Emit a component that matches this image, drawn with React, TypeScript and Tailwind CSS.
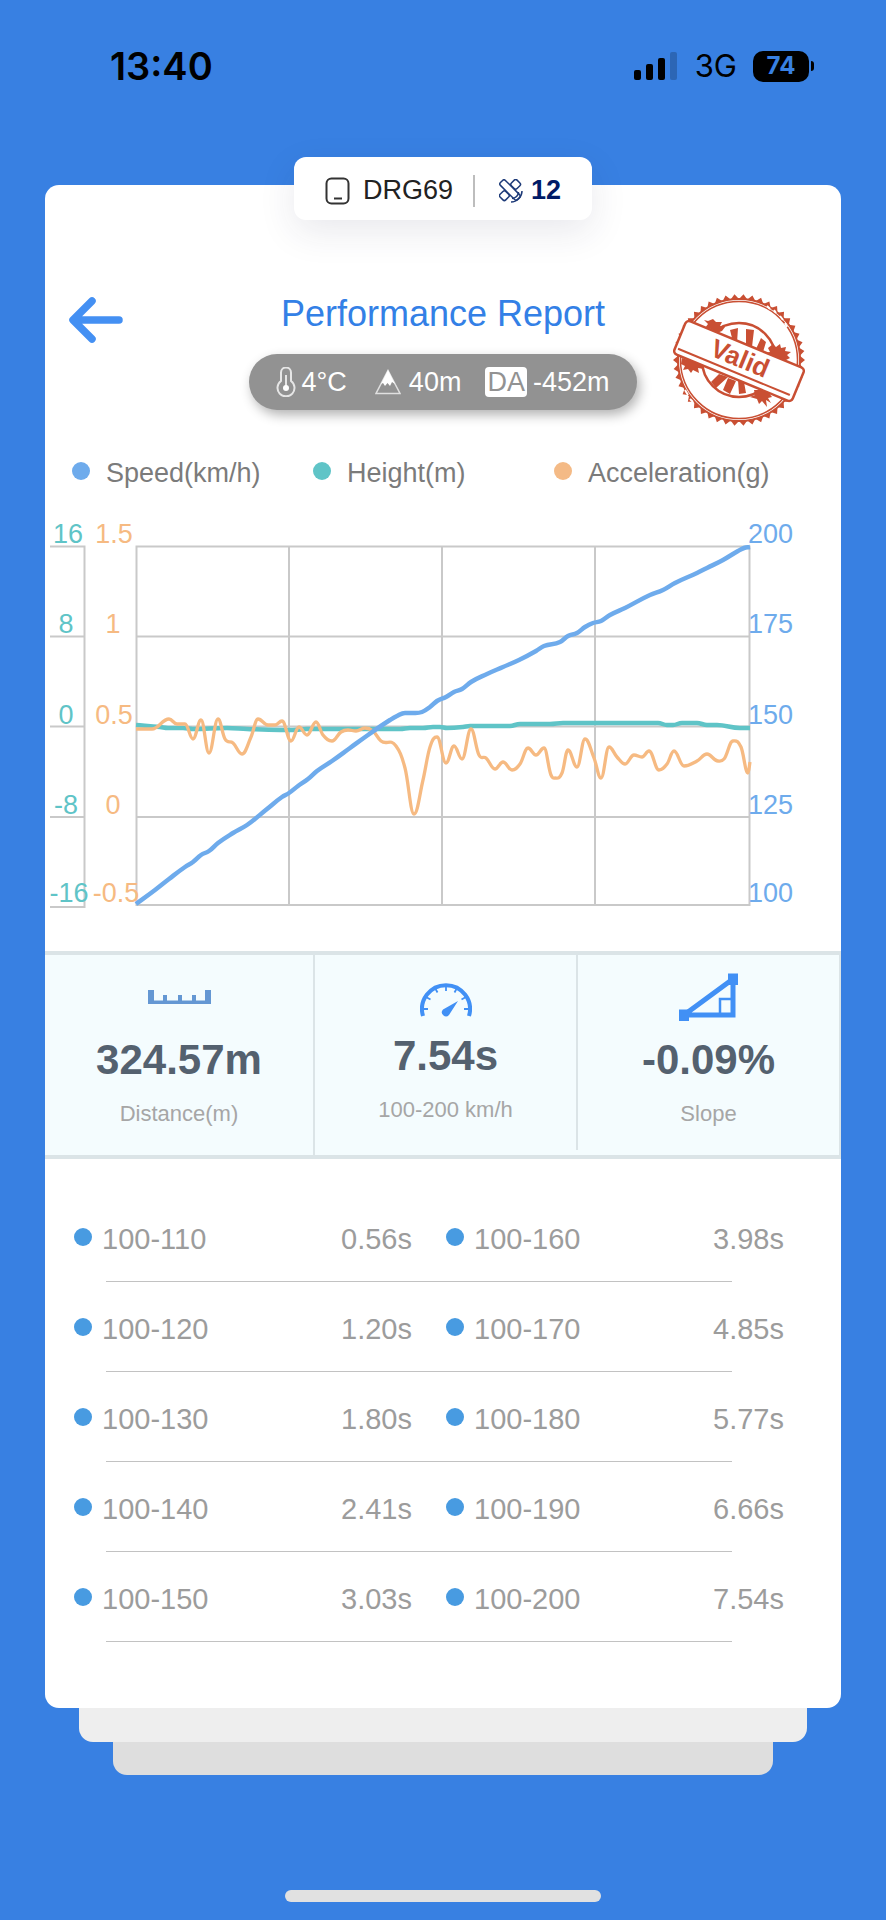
import type { ReactNode } from "react";

type Point = [number, number];

const speed: Point[] = [
  [91, 394], [110, 380], [124, 369], [140, 357], [148, 352], [156, 345], [164, 341], [173, 333],
  [188, 323], [202, 315], [222, 299], [237, 287], [244, 283], [253, 276], [263, 269], [272, 261],
  [287, 251], [305, 238], [323, 225], [345, 210], [352, 206], [360, 203], [369, 203], [377, 202],
  [385, 197], [392, 191], [401, 187], [409, 182], [417, 179], [426, 172], [442, 164], [458, 157],
  [474, 150], [491, 141], [499, 136], [515, 132], [523, 126], [532, 123], [540, 117], [548, 113],
  [556, 111], [565, 105], [580, 98], [605, 85], [618, 80], [630, 73], [652, 63], [662, 58],
  [678, 50], [693, 41], [699, 38], [705, 37],
];

const height: Point[] = [
  [91, 215], [115, 217], [123, 218], [138, 218], [148, 219], [182, 218], [202, 219], [235, 220],
  [248, 220], [262, 219], [355, 219], [365, 218], [378, 218], [388, 217], [395, 217], [402, 218],
  [418, 217], [425, 216], [465, 216], [475, 214], [505, 214], [518, 213], [613, 213], [622, 215],
  [628, 215], [637, 213], [652, 213], [662, 215], [672, 215], [695, 218], [705, 218],
];

const acceleration: Point[] = [
  [91, 219], [107, 219], [124, 209], [132, 214], [140, 214], [148, 229], [156, 210], [164, 243],
  [173, 209], [180, 229], [188, 233], [197, 244], [206, 227], [213, 209], [223, 215], [230, 215],
  [237, 211], [246, 231], [254, 217], [262, 225], [271, 212], [278, 225], [287, 231], [296, 222],
  [303, 220], [311, 221], [320, 218], [328, 221], [336, 231], [351, 236], [360, 258], [369, 304],
  [378, 270], [385, 237], [392, 227], [401, 253], [409, 236], [417, 249], [426, 219], [434, 245],
  [441, 248], [450, 259], [458, 252], [467, 260], [475, 254], [483, 238], [491, 245], [499, 238],
  [506, 265], [510, 268], [517, 263], [523, 240], [532, 257], [540, 229], [549, 248], [556, 268],
  [564, 237], [572, 247], [580, 254], [589, 245], [597, 247], [604, 241], [614, 260], [622, 254],
  [629, 241], [639, 256], [652, 251], [662, 244], [673, 251], [679, 249], [688, 231], [696, 237],
  [703, 263], [705, 252],
];

// smooth curve that stays flat at local highs and lows
function toPath(points: Point[]) {
  const slope = (i: number) =>
    (points[i + 1][1] - points[i][1]) / (points[i + 1][0] - points[i][0]);
  const tangents = points.map((_, i) => {
    if (i === 0) return slope(0);
    if (i === points.length - 1) return slope(i - 1);
    const a = slope(i - 1);
    const b = slope(i);
    return a * b <= 0 ? 0 : (a + b) / 2;
  });
  let d = `M${points[0][0]} ${points[0][1]}`;
  for (let i = 1; i < points.length; i++) {
    const [x0, y0] = points[i - 1];
    const [x1, y1] = points[i];
    const h = (x1 - x0) * 0.4;
    d += `C${x0 + h} ${y0 + tangents[i - 1] * h} ${x1 - h} ${y1 - tangents[i] * h} ${x1} ${y1}`;
  }
  return d;
}

const axisRows = [
  { y: 33, height: "16", accel: "1.5", speed: "200" },
  { y: 123, height: "8", accel: "1", speed: "175" },
  { y: 214, height: "0", accel: "0.5", speed: "150" },
  { y: 304, height: "-8", accel: "0", speed: "125" },
  { y: 392, height: "-16", accel: "-0.5", speed: "100" },
];

function Chart() {
  return (
    <svg viewBox="0 0 796 421" className="mt-[19px] block w-full" role="img" aria-label="Speed, height and acceleration">
      <g stroke="#c9c9c9" strokeWidth="2" fill="none">
        <path d="M5 36.5H39.5V397M5 126.5H39.5M5 216.5H39.5M5 307H39.5M5 397H40.5" />
        <path d="M91.5 36.5H704.5V395H91.5ZM91.5 126.5H704.5M91.5 216.5H704.5M91.5 307H704.5" />
        <path d="M244 36.5V395M397 36.5V395M550 36.5V395" />
      </g>
      <g fill="none" strokeLinejoin="round">
        <path d={toPath(height)} stroke="#5fc4c7" strokeWidth="4.5" />
        <path d={toPath(acceleration)} stroke="#f6ba82" strokeWidth="3.3" />
        <path d={toPath(speed)} stroke="#6eabec" strokeWidth="4.5" />
      </g>
      <g fontSize="27">
        {axisRows.map((row, i) => (
          <g key={row.y}>
            <text x={i === 0 ? 23 : i === 4 ? 24 : 21} y={row.y} textAnchor="middle" fill="#5fc4c7">{row.height}</text>
            <text x={i === 1 || i === 3 ? 68 : i === 4 ? 71 : 69} y={row.y} textAnchor="middle" fill="#f6ba82">{row.accel}</text>
            <text x="703" y={row.y} fill="#6eabec">{row.speed}</text>
          </g>
        ))}
      </g>
    </svg>
  );
}

function Stamp() {
  let teeth = "";
  for (let i = 0; i < 92; i++) {
    const r = i % 2 ? 61 : 66;
    const a = (i * Math.PI) / 46;
    teeth += `${i ? "L" : "M"}${67 + r * Math.cos(a)} ${66 + r * Math.sin(a)}`;
  }
  return (
    <svg viewBox="0 0 134 134" className="size-[134px]" fill="#c94f33">
      <path d={teeth + "Z"} />
      <circle cx="67" cy="66" r="61" fill="#fff" stroke="#c94f33" strokeWidth="2" />
      <circle cx="67" cy="66" r="58.5" fill="none" stroke="#c94f33" strokeWidth="1.5" />
      <circle cx="67" cy="66" r="37" fill="none" stroke="#c94f33" strokeWidth="2.5" />
      <path d="M58 36l8-2-1 15-4-1zM74 35l8 1-2 17-6-3zM89 44l5 4-3 10-7-3zM47 80l-8 8 5 6 12-11zM56 84l-5 12 7 4 6-13zM66 86l1 14 7-1-2-11z" />
      <path d="M32 26l4 1 5-2 3 3 6 0-2 4 5 1-3 4-5 2-6-4-6-1 3-4zM101 50l3 3 4-3 1 4 5-1-1 4 6 1-4 3 3 3-4 2-1 4-9-4-8-1-4-6 6-1-2-4z" />
      <path d="M10 64l6 2 3-2 5 3 7 0 5 4-6 1 2 3-6-1 1 5-6-3-2 3-3-4-5 1 2-4-4-2zM82 96l7 0 8 3 3 4-4 1 3 5-5-3 1 7-5-6-3 3-2-5-7-2 5-2z" />
      <path d="M95 12l3 3M102 16l2 3M108 22l3 4M113 29l2 4M13 96l3 5M18 105l3 3" stroke="#fff" strokeWidth="2" />
      <g transform="rotate(22.5 67 67)">
        <rect x="3" y="49" width="128" height="36" rx="4" fill="#fff" stroke="#c94f33" strokeWidth="2.5" />
        <path d="M6 79H127" stroke="#c94f33" strokeWidth="2" />
        <text x="67" y="73" fontSize="26" fontWeight="700" textAnchor="middle">Valid</text>
      </g>
    </svg>
  );
}

function StatusBar() {
  return (
    <header className="mb-[95px] flex items-center justify-between pt-[42px] pr-[72px] pl-[110px] font-[Inter,sans-serif] text-black">
      <span className="text-[38px] leading-12 font-semibold">13:40</span>
      <div className="flex items-center">
        <svg viewBox="0 0 43 28" className="w-[43px]">
          <rect y="18" width="7" height="10" rx="2" />
          <rect x="12" y="12" width="7" height="16" rx="2" />
          <rect x="24" y="6" width="7" height="22" rx="2" />
          <rect x="36" width="7" height="28" rx="2" fill="#2c66b5" />
        </svg>
        <span className="ml-[18px] text-[31px] leading-12">3G</span>
        <span className="ml-4 flex h-[31px] w-14 items-center justify-center rounded-[10px] bg-black text-2xl font-bold text-[#3880e2]">74</span>
        <span className="ml-0.5 h-2.5 w-[3px] rounded-r-full bg-black" />
      </div>
    </header>
  );
}

function DevicePill() {
  return (
    <div className="absolute -top-7 left-1/2 flex h-[63px] w-[298px] -translate-x-1/2 items-center justify-center rounded-xl bg-white pt-1 text-[27px] text-[#222] shadow-[0_12px_36px_rgba(40,40,80,0.10)]">
      <svg viewBox="0 0 26 28" className="mr-3 w-[26px]" fill="none" stroke="#333">
        <rect x="1.5" y="1.5" width="22" height="25" rx="5" strokeWidth="2" />
        <path d="M9 21.5H17" strokeWidth="2" />
      </svg>
      <span>DRG69</span>
      <span className="mr-6 ml-5 h-8 w-0.5 bg-[#bdbdbd]" />
      <svg viewBox="0 0 24 24" className="mr-2 w-6" fill="#fff" stroke="#1d3a78" strokeWidth="1.5">
        <g transform="rotate(-45 11 11)">
          <rect x="-1" y="7" width="8" height="8" rx="2" />
          <rect x="15" y="7" width="8" height="8" rx="2" />
        </g>
        <rect x="-1" y="7.5" width="24" height="7" rx="2" transform="rotate(45 11 11)" />
        <path d="M23 12C23 18 18 23 12 23M19.5 13C19.500 16.500 16.500 19.500 13 19.500" fill="none" />
      </svg>
      <span className="font-bold text-[#001a66]">12</span>
    </div>
  );
}

function ReportHeader() {
  return (
    <div className="grid grid-cols-[1fr_auto_1fr]">
      <button type="button" aria-label="Back" className="ml-6 h-13 w-14 self-start">
        <svg viewBox="0 0 56 52" fill="none" stroke="#4490f3" strokeWidth="7.5" strokeLinecap="round" strokeLinejoin="round">
          <path d="M50 26H5M23 7L4 26L23 45" />
        </svg>
      </button>
      <div className="flex flex-col items-center">
        <h1 className="text-4xl leading-10 text-[#3380e6]">Performance Report</h1>
        <div className="mt-5 flex h-14 items-center rounded-full bg-[#929292] pr-7 pl-[27px] text-[27px] whitespace-nowrap text-white shadow-[3px_5px_12px_rgba(0,0,0,0.3)]">
          <svg viewBox="0 0 20 30" className="mr-1.5 w-5" fill="none" stroke="#e6e6e6" strokeWidth="2">
            <path d="M5 14V5.5a4.5 4.5 0 0 1 10 0V14a8.5 8.5 0 1 1-10 0Z" />
            <path d="M10 8V19" />
            <circle cx="10" cy="21" r="3" fill="#fff" stroke="none" />
          </svg>
          <span>4°C</span>
          <svg viewBox="0 0 26 26" className="mr-2 ml-7 w-[26px]">
            <path d="M13 1.5L25 24.5H1Z" fill="none" stroke="#e0e0e0" strokeWidth="1.5" />
            <path d="M13 1L20 15L17 13L15 17L12.5 14L10 17L8 14L6 15Z" fill="#fff" />
          </svg>
          <span>40m</span>
          <span className="mr-1.5 ml-6 rounded bg-white px-0.5 leading-[30px] text-[#929292]">DA</span>
          <span>-452m</span>
        </div>
      </div>
      <div className="flex justify-end pr-[35px]">
        <Stamp />
      </div>
    </div>
  );
}

function Legend({ color, label }: { color: string; label: string }) {
  return (
    <li className="flex items-center gap-4">
      <span className={`mb-1 size-[18px] rounded-full ${color}`} />
      {label}
    </li>
  );
}

function Stat({ icon, value, label, className }: { icon: ReactNode; value: string; label: string; className?: string }) {
  return (
    <div className={`flex flex-col items-center border-r-2 border-[#dbe4e7] pt-[18px] ${className ?? ""}`}>
      {icon}
      <div className="mt-[15px] text-[42px] leading-[48px] font-bold text-[#54616f]">{value}</div>
      <div className="mt-3.5 mb-6 text-[22px] leading-8 text-[#a6a6a6]">{label}</div>
    </div>
  );
}

const splits = [
  ["100-110", "0.56s", "100-160", "3.98s"],
  ["100-120", "1.20s", "100-170", "4.85s"],
  ["100-130", "1.80s", "100-180", "5.77s"],
  ["100-140", "2.41s", "100-190", "6.66s"],
  ["100-150", "3.03s", "100-200", "7.54s"],
];

function SplitCells({ range, time }: { range: string; time: string }) {
  return (
    <>
      <th scope="row" className="w-1/4 pt-1 text-left font-normal">
        <div className="flex items-center gap-2.5">
          <span className="mb-1 size-[18px] rounded-full bg-[#489be1]" />
          {range}
        </div>
      </th>
      <td className="w-1/4 pt-1 pr-[34px] text-right">{time}</td>
    </>
  );
}

function SplitTable() {
  return (
    <div className="mt-[33px] pr-[23px] pl-[29px]">
      <table className="w-full text-[29px] leading-9 text-[#9c9c9c]">
        {splits.map((row) => (
          <tbody key={row[0]}>
            <tr className="h-[89px]">
              <SplitCells range={row[0]} time={row[1]} />
              <SplitCells range={row[2]} time={row[3]} />
            </tr>
            <tr>
              <td colSpan={4} className="pr-[86px] pl-8">
                <hr className="border-[#c2c2c2]" />
              </td>
            </tr>
          </tbody>
        ))}
      </table>
    </div>
  );
}

function GaugeIcon() {
  return (
    <svg viewBox="0 0 52 44" className="h-11 w-[52px]" fill="none" stroke="#4190f5">
      <path d="M3 43A24 24 0 1 1 49 43" strokeWidth="4" />
      <path d="M26 12v6M15 15l2.5 4.500M37 15l-2.5 4.500M6 24l4.5 2.500M46 24l-4.5 2.500M3 36h5M49 36h-5" strokeWidth="1.8" />
      <path d="M38 28L29 42A4 4 0 1 1 23 36.500Z" fill="#4190f5" stroke="none" />
    </svg>
  );
}

export default function App() {
  return (
    <main className="flex min-h-screen flex-col bg-[#3880e2] pb-[18px] font-['Liberation_Sans',Arial,sans-serif]">
      <StatusBar />
      <div className="px-[45px]">
        <section className="relative rounded-[14px] bg-white pt-[109px] pb-[66px]">
          <DevicePill />
          <ReportHeader />
          <ul className="mt-[27px] grid grid-cols-3 pr-[46px] pl-[27px] text-[27px] leading-9 text-[#7b7b7b]">
            <Legend color="bg-[#6eabec]" label="Speed(km/h)" />
            <Legend color="bg-[#5fc4c7]" label="Height(m)" />
            <Legend color="bg-[#f4ba86]" label="Acceleration(g)" />
          </ul>
          <Chart />
          <div className="mt-5 grid grid-cols-[270fr_263fr_263fr] border-y-4 border-[#dbe4e7] bg-[#f4fcfe]">
            <Stat
              value="324.57m"
              label="Distance(m)"
              icon={
                <svg viewBox="0 0 63 48" className="h-12 w-[63px]" fill="#6497d3">
                  <path d="M0 17H6V27.5H15V22H19V27.5H30V22H34V27.5H44V22H48V27.5H57V17H63V31H0Z" />
                </svg>
              }
            />
            <Stat className="mb-[5px]" value="7.54s" label="100-200 km/h" icon={<GaugeIcon />} />
            <Stat
              value="-0.09%"
              label="Slope"
              icon={
                <svg viewBox="0 0 59 48" className="h-12 w-[59px]" fill="none" stroke="#4190f5">
                  <path d="M5 42H54V6Z" strokeWidth="5" />
                  <path d="M52 26H41V40" strokeWidth="2.5" />
                  <path d="M0 36.5H10V48H0ZM49 0.5H59V12H49Z" fill="#4190f5" stroke="none" />
                </svg>
              }
            />
          </div>
          <SplitTable />
        </section>
        <div className="mx-[34px] h-[34px] rounded-b-[14px] bg-[#eeeeee]" />
        <div className="mx-[68px] h-[33px] rounded-b-[14px] bg-[#dedede]" />
      </div>
      <div className="mx-auto mt-auto h-3 w-[316px] rounded-full bg-[#e1e1e1]" />
    </main>
  );
}
